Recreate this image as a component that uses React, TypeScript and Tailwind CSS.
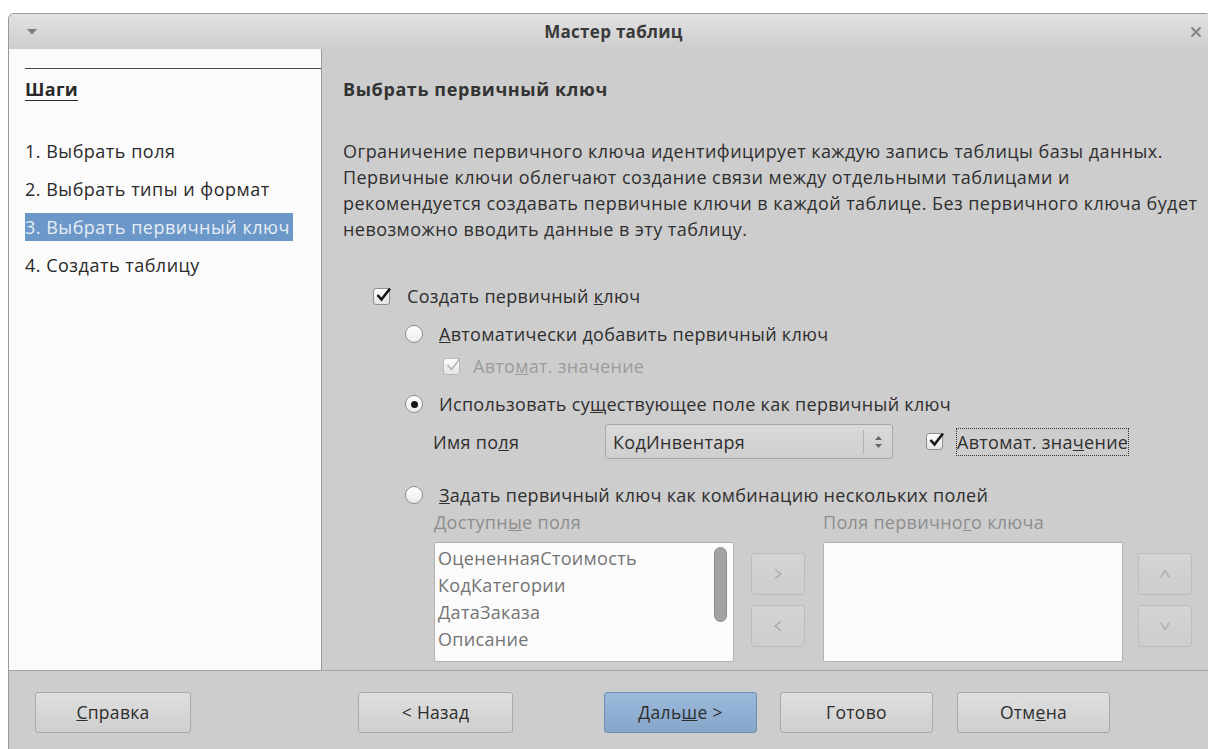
import React from "react";

const font = { fontFamily: '"Open Sans", "Noto Sans", sans-serif' };

function Check({ checked = true, disabled = false }: { checked?: boolean; disabled?: boolean }) {
  return (
    <span
      className={
        "relative inline-flex h-[17px] w-[17px] shrink-0 items-center justify-center rounded-[3px] border bg-gradient-to-b from-[#fdfdfd] to-[#e4e4e4] " +
        (disabled ? "border-[#bababa]" : "border-[#8e8e8e]")
      }
    >
      {checked && (
        <svg width="17" height="17" viewBox="0 0 17 17" className="absolute -top-[3px] left-[1px]">
          <path
            d="M2.5 9 L6.5 13.5 L15 2.5"
            fill="none"
            stroke={disabled ? "#b4b4b4" : "#161616"}
            strokeWidth={disabled ? 1.5 : 2.6}
          />
        </svg>
      )}
    </span>
  );
}

function Radio({ checked = false }: { checked?: boolean }) {
  return (
    <span className="inline-flex h-[18px] w-[18px] shrink-0 items-center justify-center rounded-full border border-[#8e8e8e] bg-gradient-to-b from-[#ffffff] to-[#ebebeb]">
      {checked && <span className="h-[7px] w-[7px] rounded-full bg-[#161616]" />}
    </span>
  );
}

// thin chevrons on the greyed-out move buttons
const chevrons: Record<string, string> = {
  right: "M3 1.5 L9 6 L3 10.5",
  left: "M9 1.5 L3 6 L9 10.5",
  up: "M1.5 9.5 L6 2.5 L10.5 9.5",
  down: "M1.5 2.5 L6 9.5 L10.5 2.5",
};

function SmallBtn({ dir }: { dir: "right" | "left" | "up" | "down" }) {
  return (
    <div className="flex h-[42px] w-[54px] items-center justify-center rounded-[3px] border border-[#bcbcbc] bg-gradient-to-b from-[#d4d4d4] to-[#cdcdcd]">
      <svg width="12" height="12" viewBox="0 0 12 12">
        <path d={chevrons[dir]} fill="none" stroke="#a6a6a6" strokeWidth="1.2" />
      </svg>
    </div>
  );
}

function FooterBtn({ children, primary = false, className = "" }: { children: React.ReactNode; primary?: boolean; className?: string }) {
  return (
    <div
      className={
        "flex h-[41px] items-center justify-center rounded-[3px] border text-[17.5px] text-[#2d2d2d] " +
        (primary
          ? "border-[#6d8fb4] bg-gradient-to-b from-[#9cb9db] to-[#86a6ca]"
          : "border-[#a9a9a9] bg-gradient-to-b from-[#dfdfdf] to-[#cfcfcf]") +
        " " +
        className
      }
    >
      {children}
    </div>
  );
}

const steps = ["1. Выбрать поля", "2. Выбрать типы и формат", "3. Выбрать первичный ключ", "4. Создать таблицу"];
const fields = ["ОцененнаяСтоимость", "КодКатегории", "ДатаЗаказа", "Описание"];

export default function App() {
  return (
    <div className="h-[749px] w-[1209px] overflow-hidden bg-white pt-[13px] tracking-[0.3px]" style={font}>
      <div className="ml-[8px] mr-[1px] flex h-[736px] flex-col overflow-hidden rounded-tl-[6px] rounded-tr-[2px] border-l border-t border-[#9a9a9a] bg-[#cdcdcd]">
        {/* title bar */}
        <div className="flex h-[35px] shrink-0 items-center bg-gradient-to-b from-[#e2e2e2] to-[#cdcdcd] pl-[18px] pr-[6px]">
          <svg width="10" height="6" viewBox="0 0 10 6">
            <path d="M0 0 H10 L5 5.5 Z" fill="#7a7a7a" />
          </svg>
          <div className="flex-1 text-center text-[17px] font-bold text-[#3a3a3a]">Мастер таблиц</div>
          <svg width="12" height="12" viewBox="0 0 12 12">
            <path d="M1.5 1.5 L10.5 10.5 M10.5 1.5 L1.5 10.5" stroke="#8a8a8a" strokeWidth="2.4" />
          </svg>
        </div>

        <div className="flex h-[622px] shrink-0 border-b border-[#a3a3a3]">
          {/* steps roadmap */}
          <div className="w-[313px] shrink-0 border-r border-[#9c9c9c] bg-[#fbfbfb] pl-[16px]">
            <div className="mt-[19px] border-t border-[#4a4a4a]" />
            <div className="mt-[7px] text-[18px] font-bold leading-[26px] text-[#2a2a2a] underline underline-offset-[4px]">Шаги</div>
            <div className="mt-[35px] flex flex-col gap-[10px]">
              {steps.map((s, i) => (
                <div
                  key={s}
                  className={
                    "flex h-[28px] w-[268px] items-center whitespace-nowrap text-[18px] tracking-[0.5px] " +
                    (i === 2 ? "bg-[#6b98c9] text-[#e6edf5]" : "text-[#2a2a2a]")
                  }
                >
                  {s}
                </div>
              ))}
            </div>
          </div>

          {/* page content */}
          <div className="flex-1 pl-[21px] text-[18px] leading-[26px] text-[#2f2f2f]">
            <div className="mt-[27px] font-bold tracking-[0.6px] text-[#333]">Выбрать первичный ключ</div>
            <p className="mt-[36px] whitespace-nowrap tracking-[0.45px]">
              Ограничение первичного ключа идентифицирует каждую запись таблицы базы данных.
              <br />
              Первичные ключи облегчают создание связи между отдельными таблицами и
              <br />
              рекомендуется создавать первичные ключи в каждой таблице. Без первичного ключа будет
              <br />
              невозможно вводить данные в эту таблицу.
            </p>

            <div className="ml-[30px] mt-[41px] flex items-center gap-[17px]">
              <Check />
              <span>
                Создать первичный <u>к</u>люч
              </span>
            </div>

            <div className="ml-[62px] mt-[12px] flex items-center gap-[16px]">
              <Radio />
              <span>
                <u>А</u>втоматически добавить первичный ключ
              </span>
            </div>
            <div className="ml-[100px] mt-[6px] flex items-center gap-[13px] text-[#9c9c9c]">
              <Check disabled />
              <span>
                Авто<u>м</u>ат. значение
              </span>
            </div>

            <div className="ml-[62px] mt-[12px] flex items-center gap-[16px]">
              <Radio checked />
              <span>
                Использовать су<u>щ</u>ествующее поле как первичный ключ
              </span>
            </div>
            <div className="ml-[90px] mt-[7px] flex h-[35px] items-center">
              <span className="w-[172px]">
                Имя по<u>л</u>я
              </span>
              <div className="flex h-[35px] w-[288px] items-center rounded-[3px] border border-[#a8a8a8] bg-gradient-to-b from-[#dadada] to-[#cfcfcf] pl-[7px]">
                <span className="flex-1">КодИнвентаря</span>
                <div className="flex h-[24px] w-[29px] flex-col items-center justify-center gap-[4px] border-l border-[#b3b3b3]">
                  <svg width="7" height="4" viewBox="0 0 7 4">
                    <path d="M0 4 L3.5 0 L7 4 Z" fill="#666" />
                  </svg>
                  <svg width="7" height="4" viewBox="0 0 7 4">
                    <path d="M0 0 L3.5 4 L7 0 Z" fill="#666" />
                  </svg>
                </div>
              </div>
              <div className="ml-[33px] flex items-center gap-[13px]">
                <Check />
                <span className="border border-dotted border-[#333] leading-[26px]">
                  Автомат. зна<u>ч</u>ение
                </span>
              </div>
            </div>

            <div className="ml-[62px] mt-[23px] flex items-center gap-[16px]">
              <Radio />
              <span>
                <u>З</u>адать первичный ключ как комбинацию нескольких полей
              </span>
            </div>

            <div className="ml-[91px] mt-[1px] flex text-[#8e8e8e]">
              <div className="flex flex-col">
                <span>
                  Доступн<u>ы</u>е поля
                </span>
                <div className="mt-[7px] flex h-[120px] w-[300px] rounded-[2px] border border-[#b3b3b3] bg-[#fbfbfb] pl-[3px]">
                  <div className="flex-1 pt-[2px] leading-[27px] text-[#747474]">
                    {fields.map((f) => (
                      <div key={f}>{f}</div>
                    ))}
                  </div>
                  <div className="mr-[6px] mt-[4px] h-[75px] w-[13px] rounded-full border border-[#8f8f8f] bg-[#a3a3a3]" />
                </div>
              </div>
              <div className="ml-[17px] mt-[44px] flex flex-col gap-[10px]">
                <SmallBtn dir="right" />
                <SmallBtn dir="left" />
              </div>
              <div className="ml-[18px] flex flex-col">
                <span>
                  Поля первично<u>г</u>о ключа
                </span>
                <div className="mt-[7px] h-[120px] w-[300px] rounded-[2px] border border-[#b3b3b3] bg-[#fbfbfb]" />
              </div>
              <div className="ml-[15px] mt-[44px] flex flex-col gap-[10px]">
                <SmallBtn dir="up" />
                <SmallBtn dir="down" />
              </div>
            </div>
          </div>
        </div>

        {/* footer */}
        <div className="flex flex-1 items-start pt-[21px]">
          <FooterBtn className="ml-[26px] w-[156px]">
            <span>
              <u>С</u>правка
            </span>
          </FooterBtn>
          <FooterBtn className="ml-[167px] w-[155px]">&lt; Назад</FooterBtn>
          <FooterBtn primary className="ml-[91px] w-[153px]">
            <span>
              Даль<u>ш</u>е &gt;
            </span>
          </FooterBtn>
          <FooterBtn className="ml-[23px] w-[153px]">Готово</FooterBtn>
          <FooterBtn className="ml-[24px] w-[153px]">
            <span>
              Отм<u>е</u>на
            </span>
          </FooterBtn>
        </div>
      </div>
    </div>
  );
}
